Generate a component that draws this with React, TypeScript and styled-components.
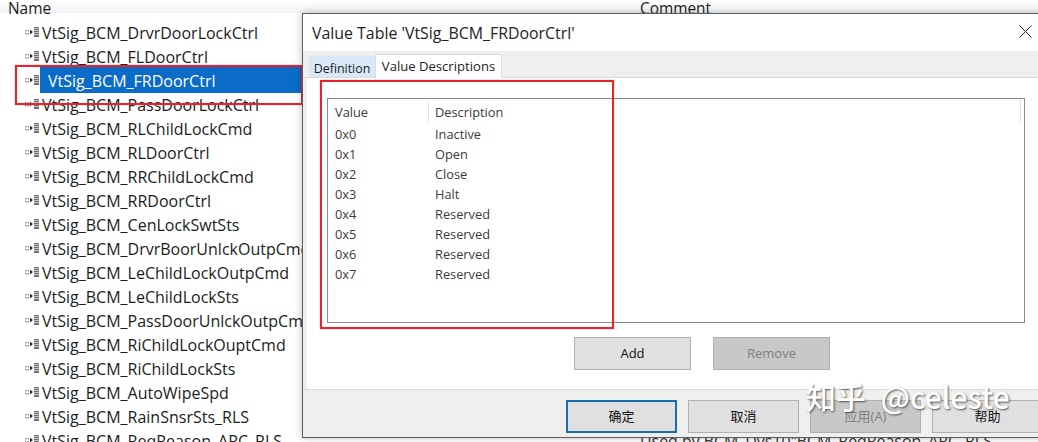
import styled, { createGlobalStyle } from 'styled-components';

const signals = [
  'VtSig_BCM_DrvrDoorLockCtrl',
  'VtSig_BCM_FLDoorCtrl',
  'VtSig_BCM_FRDoorCtrl',
  'VtSig_BCM_PassDoorLockCtrl',
  'VtSig_BCM_RLChildLockCmd',
  'VtSig_BCM_RLDoorCtrl',
  'VtSig_BCM_RRChildLockCmd',
  'VtSig_BCM_RRDoorCtrl',
  'VtSig_BCM_CenLockSwtSts',
  'VtSig_BCM_DrvrBoorUnlckOutpCmd',
  'VtSig_BCM_LeChildLockOutpCmd',
  'VtSig_BCM_LeChildLockSts',
  'VtSig_BCM_PassDoorUnlckOutpCmd',
  'VtSig_BCM_RiChildLockOuptCmd',
  'VtSig_BCM_RiChildLockSts',
  'VtSig_BCM_AutoWipeSpd',
  'VtSig_BCM_RainSnsrSts_RLS',
  'VtSig_BCM_ReqReason_ARC_RLS',
];

const values = [
  ['0x0', 'Inactive'],
  ['0x1', 'Open'],
  ['0x2', 'Close'],
  ['0x3', 'Halt'],
  ['0x4', 'Reserved'],
  ['0x5', 'Reserved'],
  ['0x6', 'Reserved'],
  ['0x7', 'Reserved'],
];

const GlobalStyle = createGlobalStyle`
  html, body {
    margin: 0;
    padding: 0;
    background: #fff;
  }

  body {
    font-family: "Open Sans", "Noto Sans CJK SC", sans-serif;
    color: #1c1c1c;
  }
`;

const Page = styled.div`
  position: relative;
  width: 1038px;
  height: 442px;
  overflow: hidden;
  background: #fff;
`;

const HeaderBar = styled.div`
  display: grid;
  grid-template-columns: 633px 1fr;
  height: 13px;
  background: linear-gradient(#fff, #f2f3f5);
  font-size: 15.4px;
  line-height: 17px;
`;

const HeaderCell = styled.div<{ $left: number }>`
  padding-left: ${props => props.$left}px;
  height: 13px;
`;

const SignalList = styled.ul`
  margin: 8px 0 0;
  padding: 0 0 0 25px;
  list-style: none;
`;

const SignalRow = styled.li`
  display: flex;
  align-items: center;
  height: 24px;
  font-size: 16px;
  white-space: nowrap;
`;

const RowIcon = styled.svg`
  flex: none;
  width: 14px;
  height: 10px;
  margin: -2px 3px 0 0;
`;

const SignalName = styled.span<{ $selected?: boolean }>`
  display: block;
  line-height: 24px;
  ${props => props.$selected && `
    flex: 1;
    align-self: flex-end;
    margin: 0 0 0 -2px;
    padding: 2px 0 0 8px;
    background: #0a6cc8;
    color: #fff;
  `}
`;

const UsedBy = styled.div`
  position: absolute;
  left: 640px;
  top: 430px;
  font-size: 15.9px;
  white-space: nowrap;
  color: #333;
`;

const Dialog = styled.section`
  position: absolute;
  left: 302px;
  top: 13px;
  width: 760px;
  height: 425px;
  display: flex;
  flex-direction: column;
  box-sizing: border-box;
  border: 1px solid #5c5c5c;
  background: #fff;
  box-shadow: 0 0 8px rgba(0, 0, 0, 0.25);
`;

const TitleBar = styled.header`
  flex: none;
  height: 37px;
  display: flex;
  align-items: center;
  padding-left: 9px;
  font-size: 15.9px;
  color: #222;
`;

const CloseIcon = styled.svg`
  position: absolute;
  left: 716px;
  top: 11px;
  width: 13px;
  height: 13px;
`;

const TabStrip = styled.div`
  flex: none;
  height: 27px;
  display: flex;
  align-items: flex-end;
  box-sizing: border-box;
  padding-left: 6px;
  background: #efefef;
  border-bottom: 1px solid #d9d9d9;
`;

const Tab = styled.div<{ $active?: boolean }>`
  box-sizing: border-box;
  display: flex;
  align-items: center;
  justify-content: center;
  ${props => props.$active ? `
    width: 127px;
    height: 24px;
    margin-bottom: -1px;
    padding-bottom: 1px;
    font-size: 13.1px;
    background: #fff;
    border: 1px solid #dcdcdc;
    border-bottom: none;
  ` : `
    width: 66px;
    height: 21px;
    padding-top: 3px;
    font-size: 12.4px;
    background: #d9e8f6;
  `}
`;

const Body = styled.div`
  flex: none;
  height: 311px;
  box-sizing: border-box;
  padding: 20px 0 0 20px;
  background: #fff;
  border-left: 4px solid #efefef;
`;

const TableBox = styled.div`
  position: relative;
  box-sizing: border-box;
  width: 698px;
  height: 225px;
  border: 1px solid #8a8a8a;
`;

const TableRow = styled.div<{ $head?: boolean }>`
  display: grid;
  grid-template-columns: 100px 1fr;
  align-items: center;
  height: ${props => props.$head ? '26px' : '20px'};
  margin-bottom: ${props => props.$head ? '-1px' : '0'};
  padding-left: 7px;
  font-size: 12.8px;
  color: #3a3a3a;
`;

const HeadCell = styled.div`
  position: relative;
  &:nth-child(2)::before {
    content: '';
    position: absolute;
    left: -7px;
    top: -2px;
    bottom: -2px;
    width: 1px;
    background: #e3e3e3;
  }
`;

const ScrollEdge = styled.div`
  position: absolute;
  right: 3px;
  top: 0;
  height: 24px;
  width: 1px;
  background: #e3e3e3;
`;

const ActionRow = styled.div`
  display: flex;
  gap: 22px;
  margin: 14px 0 0 247px;
`;

const Button = styled.button<{ $disabled?: boolean; $default?: boolean; $width?: number }>`
  box-sizing: border-box;
  flex: none;
  width: ${props => props.$width ?? 117}px;
  height: 33px;
  padding: 0 0 2px;
  font-family: inherit;
  font-size: 13px;
  border: ${props => props.$default ? '2px solid #1a6ea8' : '1px solid #b0b0b0'};
  background: ${props => props.$disabled ? '#c8c8c8' : '#e0e0e0'};
  color: ${props => props.$disabled ? '#808080' : '#111'};
`;

const Footer = styled.footer`
  flex: 1;
  display: flex;
  gap: 11px;
  box-sizing: border-box;
  padding: 10px 0 0 263px;
  background: #efefef;
  border-top: 1px solid #d9d9d9;
`;

const RedBox = styled.div<{ $x: number; $y: number; $w: number; $h: number }>`
  position: absolute;
  left: ${props => props.$x}px;
  top: ${props => props.$y}px;
  width: ${props => props.$w}px;
  height: ${props => props.$h}px;
  box-sizing: border-box;
  border: 2px solid #e8232b;
  box-shadow: 0 0 1px rgba(232, 35, 43, 0.6);
  pointer-events: none;
`;

const Watermark = styled.div`
  position: absolute;
  left: 806px;
  top: 376px;
  font-family: "Noto Sans CJK SC", "Open Sans", sans-serif;
  font-size: 30px;
  font-weight: 500;
  line-height: 40px;
  word-spacing: 8px;
  white-space: nowrap;
  color: #fff;
  text-shadow: 1px 1px 2px rgba(60, 60, 60, 0.85);
`;

const TreeIcon = () => (
  <RowIcon viewBox="0 0 14 10">
    <path d="M0 3h1.5v1.5H0zM2.5 3H4v1.5H2.5zM0 6h1.5v1.5H0zM2.5 6H4v1.5H2.5z" fill="#8f8f8f" />
    <path d="M5 2.8 8 5 5 7.2z" fill="#222" />
    <path d="M9 0h5v10H9z" fill="#6f6f6f" />
    <path d="M9 1.5h5M9 3.5h5M9 5.5h5M9 7.5h5" stroke="#d8d8d8" strokeWidth="0.8" />
  </RowIcon>
);

const App = () => (
  <Page>
    <GlobalStyle />
    <HeaderBar>
      <HeaderCell $left={8}>Name</HeaderCell>
      <HeaderCell $left={7}>Comment</HeaderCell>
    </HeaderBar>
    <SignalList>
      {signals.map((name, index) => (
        <SignalRow key={name}>
          <TreeIcon />
          <SignalName $selected={index === 2}>{name}</SignalName>
        </SignalRow>
      ))}
    </SignalList>
    <UsedBy>Used by BCM_Dys10"BCM_ReqReason_ARC_RLS</UsedBy>

    <RedBox $x={15} $y={65} $w={288} $h={40} />

    <Dialog>
      <TitleBar>Value Table 'VtSig_BCM_FRDoorCtrl'</TitleBar>
      <CloseIcon viewBox="0 0 13 13">
        <path d="M0.5 0.5 12.5 12.5M12.5 0.5 0.5 12.5" stroke="#222" strokeWidth="1" fill="none" />
      </CloseIcon>
      <TabStrip>
        <Tab>Definition</Tab>
        <Tab $active>Value Descriptions</Tab>
      </TabStrip>
      <Body>
        <TableBox>
          <ScrollEdge />
          <TableRow $head>
            <HeadCell>Value</HeadCell>
            <HeadCell>Description</HeadCell>
          </TableRow>
          {values.map(([value, description]) => (
            <TableRow key={value}>
              <div>{value}</div>
              <div>{description}</div>
            </TableRow>
          ))}
        </TableBox>
        <ActionRow>
          <Button>Add</Button>
          <Button $disabled>Remove</Button>
        </ActionRow>
      </Body>
      <Footer>
        <Button $default $width={111}>确定</Button>
        <Button $width={111}>取消</Button>
        <Button $disabled $width={111}>应用(A)</Button>
        <Button $width={111}>帮助</Button>
      </Footer>
    </Dialog>

    <RedBox $x={320} $y={80} $w={294} $h={249} />
    <Watermark>知乎 @celeste</Watermark>
  </Page>
);

export default App;
